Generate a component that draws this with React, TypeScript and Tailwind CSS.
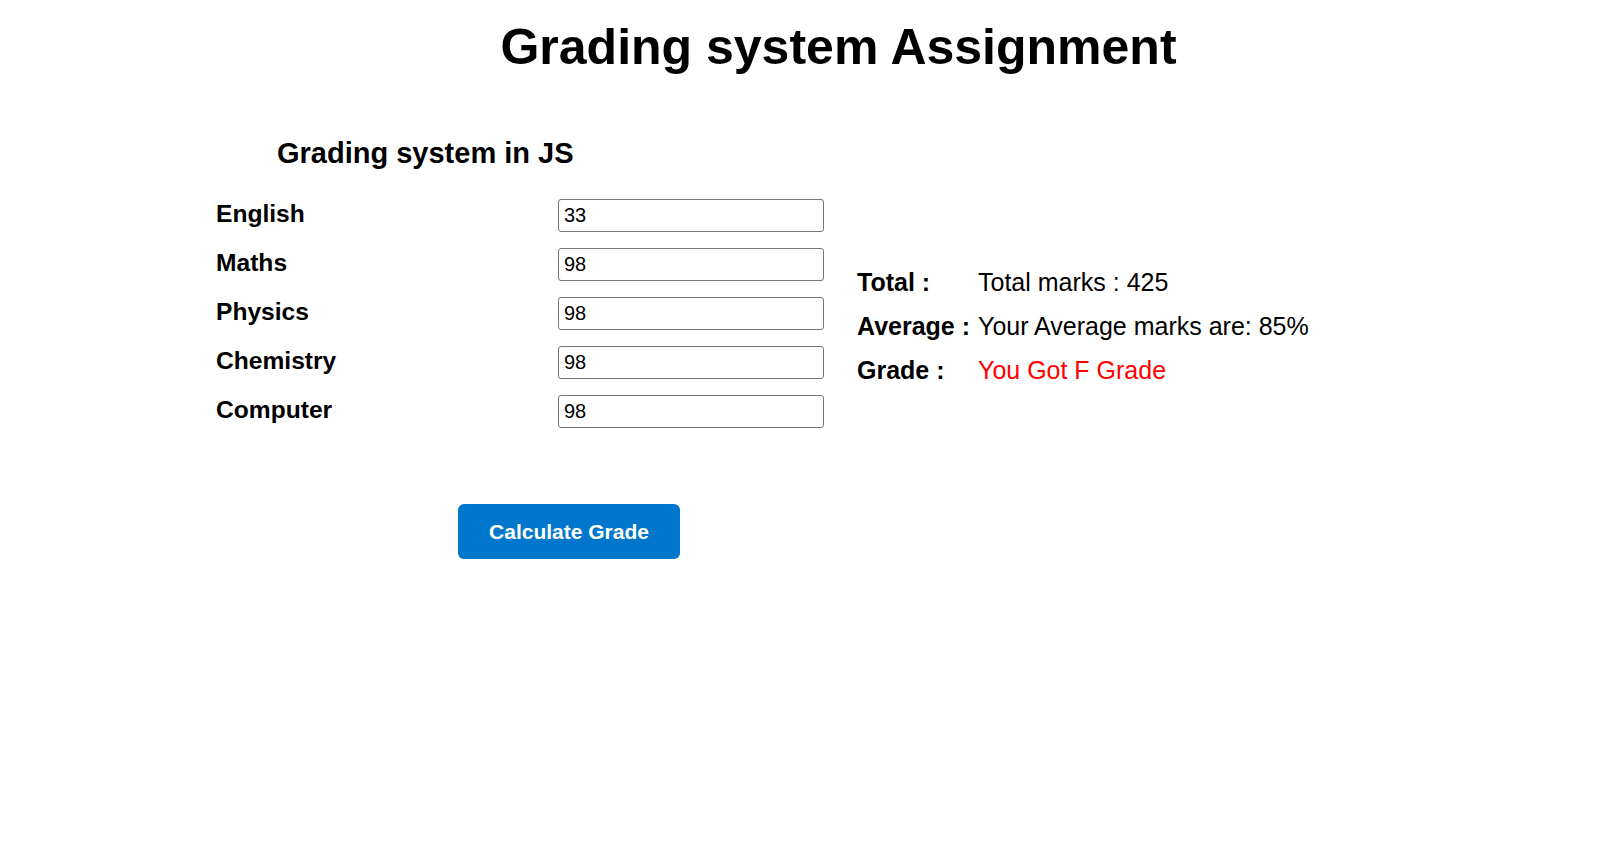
import { useState } from "react";

const subjects = ["English", "Maths", "Physics", "Chemistry", "Computer"];

const App = () => {
  const [marks, setMarks] = useState<string[]>(["33", "98", "98", "98", "98"]);
  const [result, setResult] = useState({
    total: "Total marks : 425",
    average: "Your Average marks are: 85%",
    grade: "You Got F Grade",
  });

  const calculate = () => {
    const total = marks.reduce((s, m) => s + (Number(m) || 0), 0);
    const avg = Math.round(total / marks.length);
    const anyFail = marks.some((m) => (Number(m) || 0) < 35);
    let grade = "F";
    if (!anyFail) {
      if (avg >= 90) grade = "A";
      else if (avg >= 80) grade = "B";
      else if (avg >= 70) grade = "C";
      else if (avg >= 60) grade = "D";
    }
    setResult({
      total: `Total marks : ${total}`,
      average: `Your Average marks are: ${avg}%`,
      grade: `You Got ${grade} Grade`,
    });
  };

  return (
    <div className="min-h-screen bg-white text-black font-['Liberation_Sans',Arial,sans-serif]">
      <h1 className="pt-[22px] pl-[74px] text-center text-[50px] font-bold leading-none">
        Grading system Assignment
      </h1>

      <div className="pl-[216px]">
        <h3 className="mt-[67px] pl-[61px] text-[29px] font-bold leading-none">Grading system in JS</h3>

        <div className="mt-[31px] flex items-start">
          <div className="flex flex-col gap-4">
            {subjects.map((name, i) => (
              <div key={name} className="flex items-start">
                <label className="w-[342px] pt-[3px] text-[24.6px] font-bold leading-none">{name}</label>
                <input
                  value={marks[i]}
                  onChange={(e) => setMarks((p) => p.map((m, j) => (j === i ? e.target.value : m)))}
                  className="h-[33px] w-[266px] rounded-[3px] border border-[#767676] px-[5px] text-[20px] leading-none text-black outline-none"
                />
              </div>
            ))}
          </div>

          <div className="ml-[33px] mt-[61px] grid grid-cols-[121px_auto] text-[25px] leading-[44px]">
            <span className="font-bold">Total :</span>
            <span>{result.total}</span>
            <span className="font-bold">Average :</span>
            <span>{result.average}</span>
            <span className="font-bold">Grade :</span>
            <span className="text-[#ff0000]">{result.grade}</span>
          </div>
        </div>

        <button
          onClick={calculate}
          className="ml-[242px] mt-[76px] h-[55px] w-[222px] rounded-[6px] bg-[#0077cc] text-[21px] font-bold text-white"
        >
          Calculate Grade
        </button>
      </div>
    </div>
  );
};

export default App;
